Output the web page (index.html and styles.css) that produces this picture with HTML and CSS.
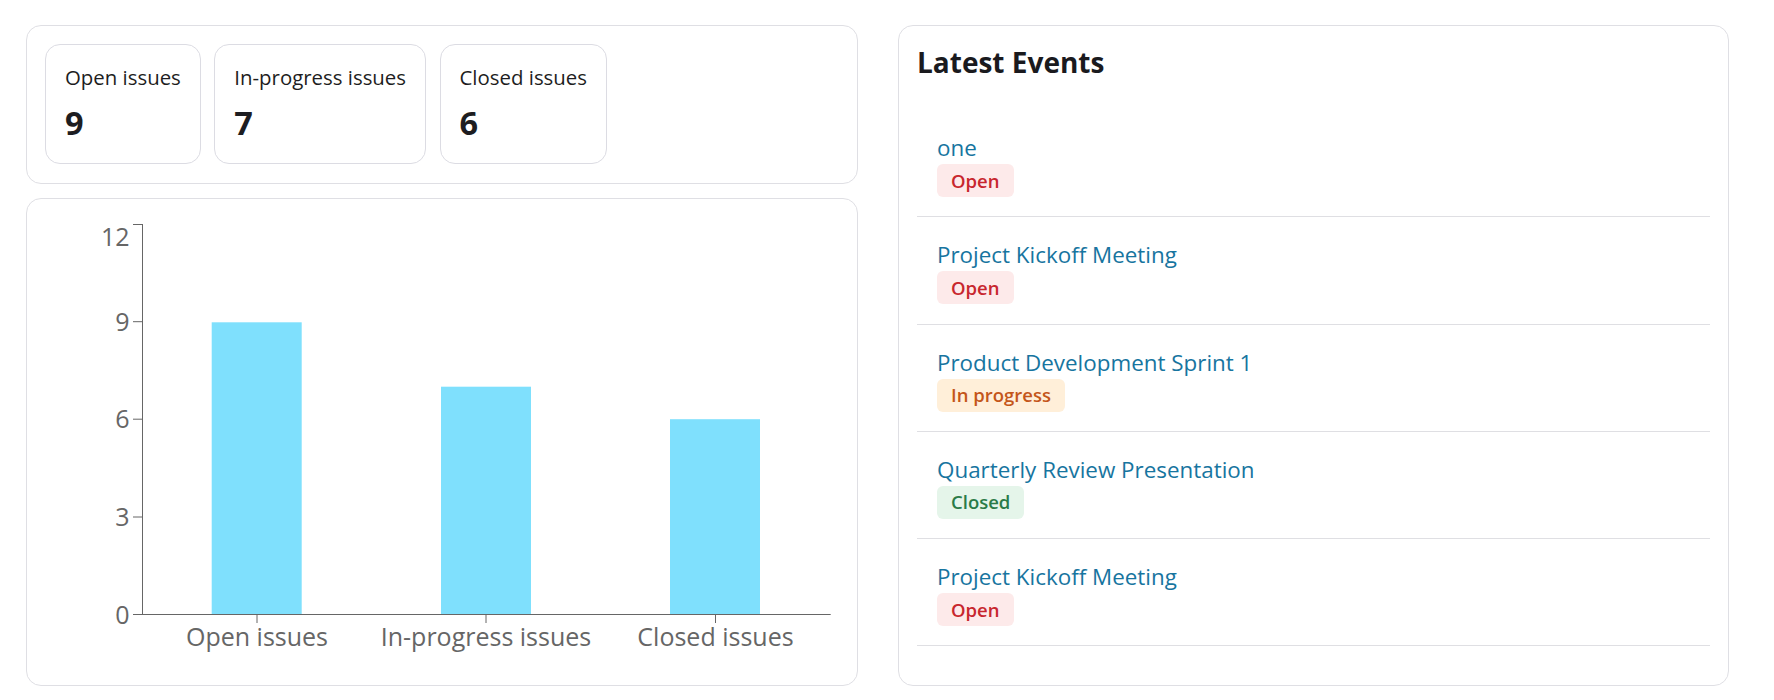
FILE: index.html
```html
<!DOCTYPE html>
<html lang="en">
<head>
<meta charset="utf-8">
<title>Dashboard</title>
<link rel="stylesheet" href="styles.css">
</head>
<body>
<div class="page">
  <div class="left-col">
    <section class="card stats">
      <div class="stat">
        <div class="stat-label">Open issues</div>
        <div class="stat-value">9</div>
      </div>
      <div class="stat">
        <div class="stat-label">In-progress issues</div>
        <div class="stat-value">7</div>
      </div>
      <div class="stat">
        <div class="stat-label">Closed issues</div>
        <div class="stat-value">6</div>
      </div>
    </section>
    <section class="card chart-card">
      <svg class="chart" width="829" height="486" viewBox="0 0 829 486">
        <g class="bars">
          <rect x="184.7" y="123.3" width="90" height="291.7"></rect>
          <rect x="414" y="187.7" width="90" height="227.3"></rect>
          <rect x="643" y="220.2" width="90" height="194.8"></rect>
        </g>
        <g class="axis">
          <line x1="115.5" y1="25" x2="115.5" y2="415.5"></line>
          <line x1="106" y1="25.5" x2="115.5" y2="25.5"></line>
          <line x1="106" y1="122.7" x2="115.5" y2="122.7"></line>
          <line x1="106" y1="220.2" x2="115.5" y2="220.2"></line>
          <line x1="106" y1="318" x2="115.5" y2="318"></line>
          <line x1="106" y1="415.5" x2="803.7" y2="415.5"></line>
          <line x1="230" y1="415.5" x2="230" y2="424"></line>
          <line x1="459" y1="415.5" x2="459" y2="424"></line>
          <line x1="688.5" y1="415.5" x2="688.5" y2="424"></line>
        </g>
        <g class="ticks-y">
          <text x="102.5" y="46.7">12</text>
          <text x="102.5" y="131.7">9</text>
          <text x="102.5" y="229.2">6</text>
          <text x="102.5" y="327">3</text>
          <text x="102.5" y="424.5">0</text>
        </g>
        <g class="ticks-x">
          <text x="230" y="447">Open issues</text>
          <text x="459" y="447">In-progress issues</text>
          <text x="688.5" y="447">Closed issues</text>
        </g>
      </svg>
    </section>
  </div>
  <section class="card events">
    <h2 class="events-title">Latest Events</h2>
    <ul class="event-list">
      <li class="event">
        <a class="event-name" href="#">one</a>
        <span class="badge badge-open">Open</span>
      </li>
      <li class="event">
        <a class="event-name" href="#">Project Kickoff Meeting</a>
        <span class="badge badge-open">Open</span>
      </li>
      <li class="event">
        <a class="event-name" href="#">Product Development Sprint 1</a>
        <span class="badge badge-progress">In progress</span>
      </li>
      <li class="event">
        <a class="event-name" href="#">Quarterly Review Presentation</a>
        <span class="badge badge-closed">Closed</span>
      </li>
      <li class="event">
        <a class="event-name" href="#">Project Kickoff Meeting</a>
        <span class="badge badge-open">Open</span>
      </li>
    </ul>
  </section>
</div>
</body>
</html>
```

FILE: styles.css
```css
* { box-sizing: border-box; }

html, body {
  margin: 0;
  padding: 0;
  background: #ffffff;
  font-family: "Open Sans", "Noto Sans", sans-serif;
  color: #1d1d21;
}

.page {
  display: grid;
  grid-template-columns: 832px 831px;
  column-gap: 40px;
  padding: 25px 0 0 26px;
  align-items: stretch;
}

.left-col {
  display: flex;
  flex-direction: column;
  gap: 14px;
}

.card {
  border: 1px solid #dfdfe4;
  border-radius: 15px;
  background: #fff;
}

/* stats */
.stats {
  display: flex;
  gap: 13.5px;
  padding: 18px 18px 19px;
}

.stat {
  height: 120px;
  border: 1px solid #dcdce3;
  border-radius: 15px;
  padding: 18px 19px 0 19px;
}

.stat-label {
  font-size: 20.4px;
  line-height: 28px;
  color: #1d1d21;
}

.stat-value {
  margin-top: 11.5px;
  font-size: 32.5px;
  line-height: 40px;
  font-weight: 700;
  color: #1d1d21;
}

/* chart */
.chart-card {
  height: 488px;
}

.chart {
  display: block;
}

.bars rect {
  fill: #7fe0fd;
}

.axis line {
  stroke: #666666;
  stroke-width: 1;
}

.ticks-y text,
.ticks-x text {
  font-family: "Open Sans", "Noto Sans", sans-serif;
  font-size: 25px;
  fill: #666666;
}

.ticks-y text { text-anchor: end; }
.ticks-x text { text-anchor: middle; }

/* events */
.events {
  padding: 17px 18px 16px;
}

.events-title {
  margin: 0;
  font-size: 28px;
  line-height: 38px;
  font-weight: 700;
  color: #1a1a1e;
}

.event-list {
  list-style: none;
  margin: 29px 0 0;
  padding: 0;
}

.event {
  display: flex;
  flex-direction: column;
  align-items: flex-start;
  gap: 0.5px;
  padding: 23px 20px 19.3px;
  border-bottom: 1px solid #dfdfe3;
}

.event-name {
  font-size: 22.4px;
  line-height: 30.5px;
  color: #17759f;
  text-decoration: none;
}

.badge {
  display: inline-block;
  font-size: 18.5px;
  line-height: 24px;
  font-weight: 600;
  padding: 4.5px 14px;
  border-radius: 6px;
}

.badge-open {
  background: #fdeaea;
  color: #c8262e;
}

.badge-progress {
  background: #ffefd9;
  color: #c4561a;
}

.badge-closed {
  background: #e5f5ea;
  color: #2a7b48;
}
```
